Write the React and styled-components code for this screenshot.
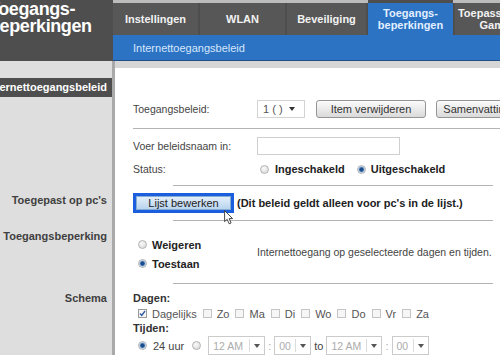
import React from "react";
import styled, { createGlobalStyle } from "styled-components";

const GlobalStyle = createGlobalStyle`
  html, body {
    margin: 0;
    padding: 0;
    overflow: hidden;
    background: #fff;
  }
`;

const Page = styled.div`
  width: 500px;
  height: 359px;
  overflow: hidden;
  background: #fff;
  font-family: "Liberation Sans", Arial, sans-serif;
  font-size: 11px;
  color: #444;
`;

const Header = styled.header`
  display: flex;
  height: 61px;
  background: #4e4e4e;
`;

const TitleBox = styled.div`
  flex: none;
  width: 113px;
  overflow: hidden;
`;

const Title = styled.h1`
  margin: 1px 0 0 -11px;
  font-size: 18px;
  line-height: 17px;
  font-weight: bold;
  letter-spacing: -0.4px;
  color: #fff;
  white-space: nowrap;
`;

const Nav = styled.nav`
  flex: 1;
  min-width: 0;
  display: flex;
  flex-direction: column;
  overflow: hidden;
`;

const TabRow = styled.div`
  display: flex;
  gap: 2px;
  height: 35px;
  background: linear-gradient(#bcbcbc 0 3px, transparent 3px);
`;

const Tab = styled.div`
  flex: none;
  width: ${(p) => p.$width}px;
  box-sizing: border-box;
  border-top: 3px solid ${(p) => (p.$active ? "#4e4e4e" : "transparent")};
  background: ${(p) => (p.$active ? "#2c73c4" : "#575757")};
  background-clip: padding-box;
  color: ${(p) => (p.$active ? "#e2efff" : "#f2f2f2")};
  display: flex;
  align-items: center;
  justify-content: center;
  text-align: center;
  font-weight: bold;
  font-size: 11px;
  line-height: 12px;
  white-space: nowrap;
`;

const SubBar = styled.div`
  height: 25px;
  background: #2c73c4;
  border-bottom: 1px solid #1f4f86;
  display: flex;
  align-items: center;
  padding-left: 20px;
  color: #d6e7fb;
  font-size: 11px;
`;

const Body = styled.div`
  display: grid;
  grid-template-columns: 115px 1fr;
`;

const Side = styled.div`
  background: #dedede;
  border-right: 3px solid #a9a9a9;
  padding: ${(p) => p.$top || 0}px 5px 0 0;
  text-align: right;
  font-weight: bold;
  color: #404040;
  line-height: 13px;
  white-space: nowrap;
`;

const SideBar = styled.div`
  margin-right: -5px;
  height: 19px;
  background: #4e4e4e;
  color: #fff;
  display: flex;
  justify-content: flex-end;
  align-items: center;
  padding-right: 5px;
  overflow: hidden;
`;

const Field = styled.div`
  padding: ${(p) => p.$top || 0}px 0 0 18px;
  border-top: ${(p) => (p.$strip ? "7px solid #d6d6d6" : "none")};
  min-width: 0;
`;

const Row = styled.div`
  display: flex;
  align-items: center;
  height: ${(p) => p.$h || 18}px;
  margin-top: ${(p) => p.$mt || 0}px;
  margin-left: ${(p) => p.$ml || 0}px;
  white-space: nowrap;
`;

const FieldLabel = styled.span`
  flex: none;
  width: 124px;
  color: #444;
  font-size: 10.5px;
`;

const HLine = styled.div`
  height: 1px;
  background: #b3b3b3;
  margin: ${(p) => p.$mt}px ${(p) => p.$mr || 0}px 0 ${(p) => p.$ml || 0}px;
`;

const Arrow = styled.span`
  flex: none;
  width: 0;
  height: 0;
  border-left: 3px solid transparent;
  border-right: 3px solid transparent;
  border-top: 4px solid ${(p) => p.$color || "#333"};
`;

const Select = styled.div`
  flex: none;
  box-sizing: border-box;
  width: 48px;
  height: 18px;
  border: 1px solid #d3d3d3;
  display: flex;
  align-items: center;
  justify-content: space-between;
  padding: 0 9px 0 5px;
  color: #555;
`;

const Button = styled.div`
  flex: none;
  box-sizing: border-box;
  width: ${(p) => p.$w}px;
  height: 18px;
  margin-left: ${(p) => p.$ml}px;
  border: 1px solid #959595;
  border-radius: 3px;
  background: linear-gradient(#fbfbfb, #dadada);
  display: flex;
  align-items: center;
  justify-content: center;
  color: #333;
`;

const TextInput = styled.div`
  box-sizing: border-box;
  width: 143px;
  height: 18px;
  border: 1px solid #cfcfcf;
`;

const Radio = styled.span`
  flex: none;
  box-sizing: border-box;
  width: 9px;
  height: 9px;
  border-radius: 50%;
  border: 1px solid #b4b4b4;
  margin: 0 ${(p) => p.$mr || 5}px 0 ${(p) => p.$ml || 0}px;
  background: ${(p) =>
    p.$checked
      ? "radial-gradient(circle, #1d4d8c 0 1.8px, #7ea6d4 2.4px, #e2e9f1 3.5px)"
      : "radial-gradient(circle at 40% 35%, #fafafa, #d4d4d4)"};
`;

const Strong = styled.span`
  font-weight: bold;
  color: #222;
  margin-right: ${(p) => p.$mr || 0}px;
  margin-left: ${(p) => p.$ml || 0}px;
`;

const FocusButton = styled.div`
  position: relative;
  box-sizing: border-box;
  width: 101px;
  height: 20px;
  border: 3px solid #1c5fde;
  background: linear-gradient(#e6f1fb, #b5d2ed);
  box-shadow: inset 0 0 0 1px #86acd3;
  display: flex;
  align-items: center;
  justify-content: center;
  color: #222;
`;

const Cursor = styled.svg`
  position: absolute;
  left: 88px;
  top: 14px;
  width: 10px;
  height: 15px;
`;

const Note = styled.span`
  color: #444;
  font-size: ${(p) => p.$size || 11}px;
  margin-top: ${(p) => p.$mt || 0}px;
`;

const Stack = styled.div`
  flex: none;
  width: 119px;
  margin-left: 5px;
`;

const Bold = styled.div`
  font-weight: bold;
  color: #333;
  line-height: 13px;
`;

const Check = styled.span`
  flex: none;
  box-sizing: border-box;
  width: 9px;
  height: 9px;
  border: 1px solid ${(p) => (p.$checked ? "#9a9a9a" : "#c4c4c4")};
  background: #f6f6f6;
  margin-right: 5px;
  display: flex;
  align-items: center;
  justify-content: center;
`;

const DayLabel = styled.span`
  color: #555;
  margin-right: 6px;
`;

const TimeSelect = styled.div`
  flex: none;
  box-sizing: border-box;
  width: ${(p) => p.$w}px;
  height: 19px;
  border: 1px solid #cbcbcb;
  display: flex;
  align-items: center;
  color: #ababab;
  font-size: 10.5px;
`;

const TimeValue = styled.span`
  flex: 1;
  padding-left: 4px;
`;

const ArrowBox = styled.span`
  flex: none;
  width: 14px;
  height: 13px;
  border-left: 1px solid #dcdcdc;
  display: flex;
  align-items: center;
  justify-content: center;
`;

const Sep = styled.span`
  color: ${(p) => (p.$dark ? "#444" : "#aaa")};
  margin: 0 ${(p) => p.$m}px;
`;

const tabs = [
  { label: "Instellingen", w: 85 },
  { label: "WLAN", w: 85 },
  { label: "Beveiliging", w: 79 },
  { label: ["Toegangs-", "beperkingen"], w: 85, active: true },
  { label: ["Toepassingen &", "Gaming"], w: 90 },
];

const days = ["Zo", "Ma", "Di", "Wo", "Do", "Vr", "Za"];

const TickIcon = () => (
  <svg width="7" height="7" viewBox="0 0 7 7">
    <path d="M1 3.5 L2.8 5.5 L6 1" fill="none" stroke="#2b56a3" strokeWidth="1.3" />
  </svg>
);

const TimeBox = ({ w, value }) => (
  <TimeSelect $w={w}>
    <TimeValue>{value}</TimeValue>
    <ArrowBox>
      <Arrow $color="#555" />
    </ArrowBox>
  </TimeSelect>
);

export default function App() {
  return (
    <Page>
      <GlobalStyle />
      <Header>
        <TitleBox>
          <Title>
            Toegangs-
            <br />
            beperkingen
          </Title>
        </TitleBox>
        <Nav>
          <TabRow>
            {tabs.map((t, i) => (
              <Tab key={i} $width={t.w} $active={t.active}>
                {Array.isArray(t.label) ? (
                  <span>
                    {t.label[0]}
                    <br />
                    {t.label[1]}
                  </span>
                ) : (
                  t.label
                )}
              </Tab>
            ))}
          </TabRow>
          <SubBar>Internettoegangsbeleid</SubBar>
        </Nav>
      </Header>

      <Body>
        <Side $top={17}>
          <SideBar>Internettoegangsbeleid</SideBar>
        </Side>
        <Field $strip />

        <Side />
        <Field $top={3}>
          <Row>
            <FieldLabel>Toegangsbeleid:</FieldLabel>
            <Select>
              <span>1 ( )</span>
              <Arrow />
            </Select>
            <Button $w={110} $ml={11}>
              Item verwijderen
            </Button>
            <Button $w={82} $ml={10}>
              Samenvatting
            </Button>
          </Row>
          <HLine $mt={10} />
          <Row $mt={8}>
            <FieldLabel>Voer beleidsnaam in:</FieldLabel>
            <TextInput />
          </Row>
          <Row $mt={6} $h={16}>
            <FieldLabel>Status:</FieldLabel>
            <Radio $ml={3} $mr={6} />
            <Strong $mr={12}>Ingeschakeld</Strong>
            <Radio $checked />
            <Strong>Uitgeschakeld</Strong>
          </Row>
          <HLine $mt={8} $ml={40} $mr={7} />
        </Field>

        <Side $top={8}>Toegepast op pc's</Side>
        <Field $top={7}>
          <Row $h={20}>
            <FocusButton>
              Lijst bewerken
              <Cursor viewBox="0 0 10 15">
                <path
                  d="M0.6 0.6 L0.6 11.6 L3.2 9.3 L5.2 13.8 L7.1 13 L5.2 8.6 L8.6 8.6 Z"
                  fill="#fff"
                  stroke="#333"
                  strokeWidth="0.9"
                  strokeLinejoin="round"
                />
              </Cursor>
            </FocusButton>
            <Strong $ml={3}>
              (Dit beleid geldt alleen voor pc's in de lijst.)
            </Strong>
          </Row>
          <HLine $mt={7} $ml={40} $mr={7} />
        </Field>

        <Side $top={9}>Toegangsbeperking</Side>
        <Field $top={14}>
          <Row $h={38}>
            <Stack>
              <Row $h={19}>
                <Radio />
                <Strong>Weigeren</Strong>
              </Row>
              <Row $h={19}>
                <Radio $checked />
                <Strong>Toestaan</Strong>
              </Row>
            </Stack>
            <Note $size={10.5} $mt={-4}>
              Internettoegang op geselecteerde dagen en tijden.
            </Note>
          </Row>
          <HLine $mt={10} $ml={40} $mr={7} />
        </Field>

        <Side $top={8}>Schema</Side>
        <Field $top={8}>
          <Bold>Dagen:</Bold>
          <Row $h={17} $ml={5}>
            <Check $checked>
              <TickIcon />
            </Check>
            <DayLabel>Dagelijks</DayLabel>
            {days.map((d) => (
              <React.Fragment key={d}>
                <Check />
                <DayLabel>{d}</DayLabel>
              </React.Fragment>
            ))}
          </Row>
          <Bold>Tijden:</Bold>
          <Row $h={19} $ml={5} $mt={1}>
            <Radio $checked $mr={6} />
            <Note>24 uur</Note>
            <Radio $ml={8} $mr={7} />
            <TimeBox w={57} value="12 AM" />
            <Sep $m={3}>:</Sep>
            <TimeBox w={37} value="00" />
            <Sep $m={3} $dark>
              to
            </Sep>
            <TimeBox w={56} value="12 AM" />
            <Sep $m={3}>:</Sep>
            <TimeBox w={37} value="00" />
          </Row>
        </Field>
      </Body>
    </Page>
  );
}
